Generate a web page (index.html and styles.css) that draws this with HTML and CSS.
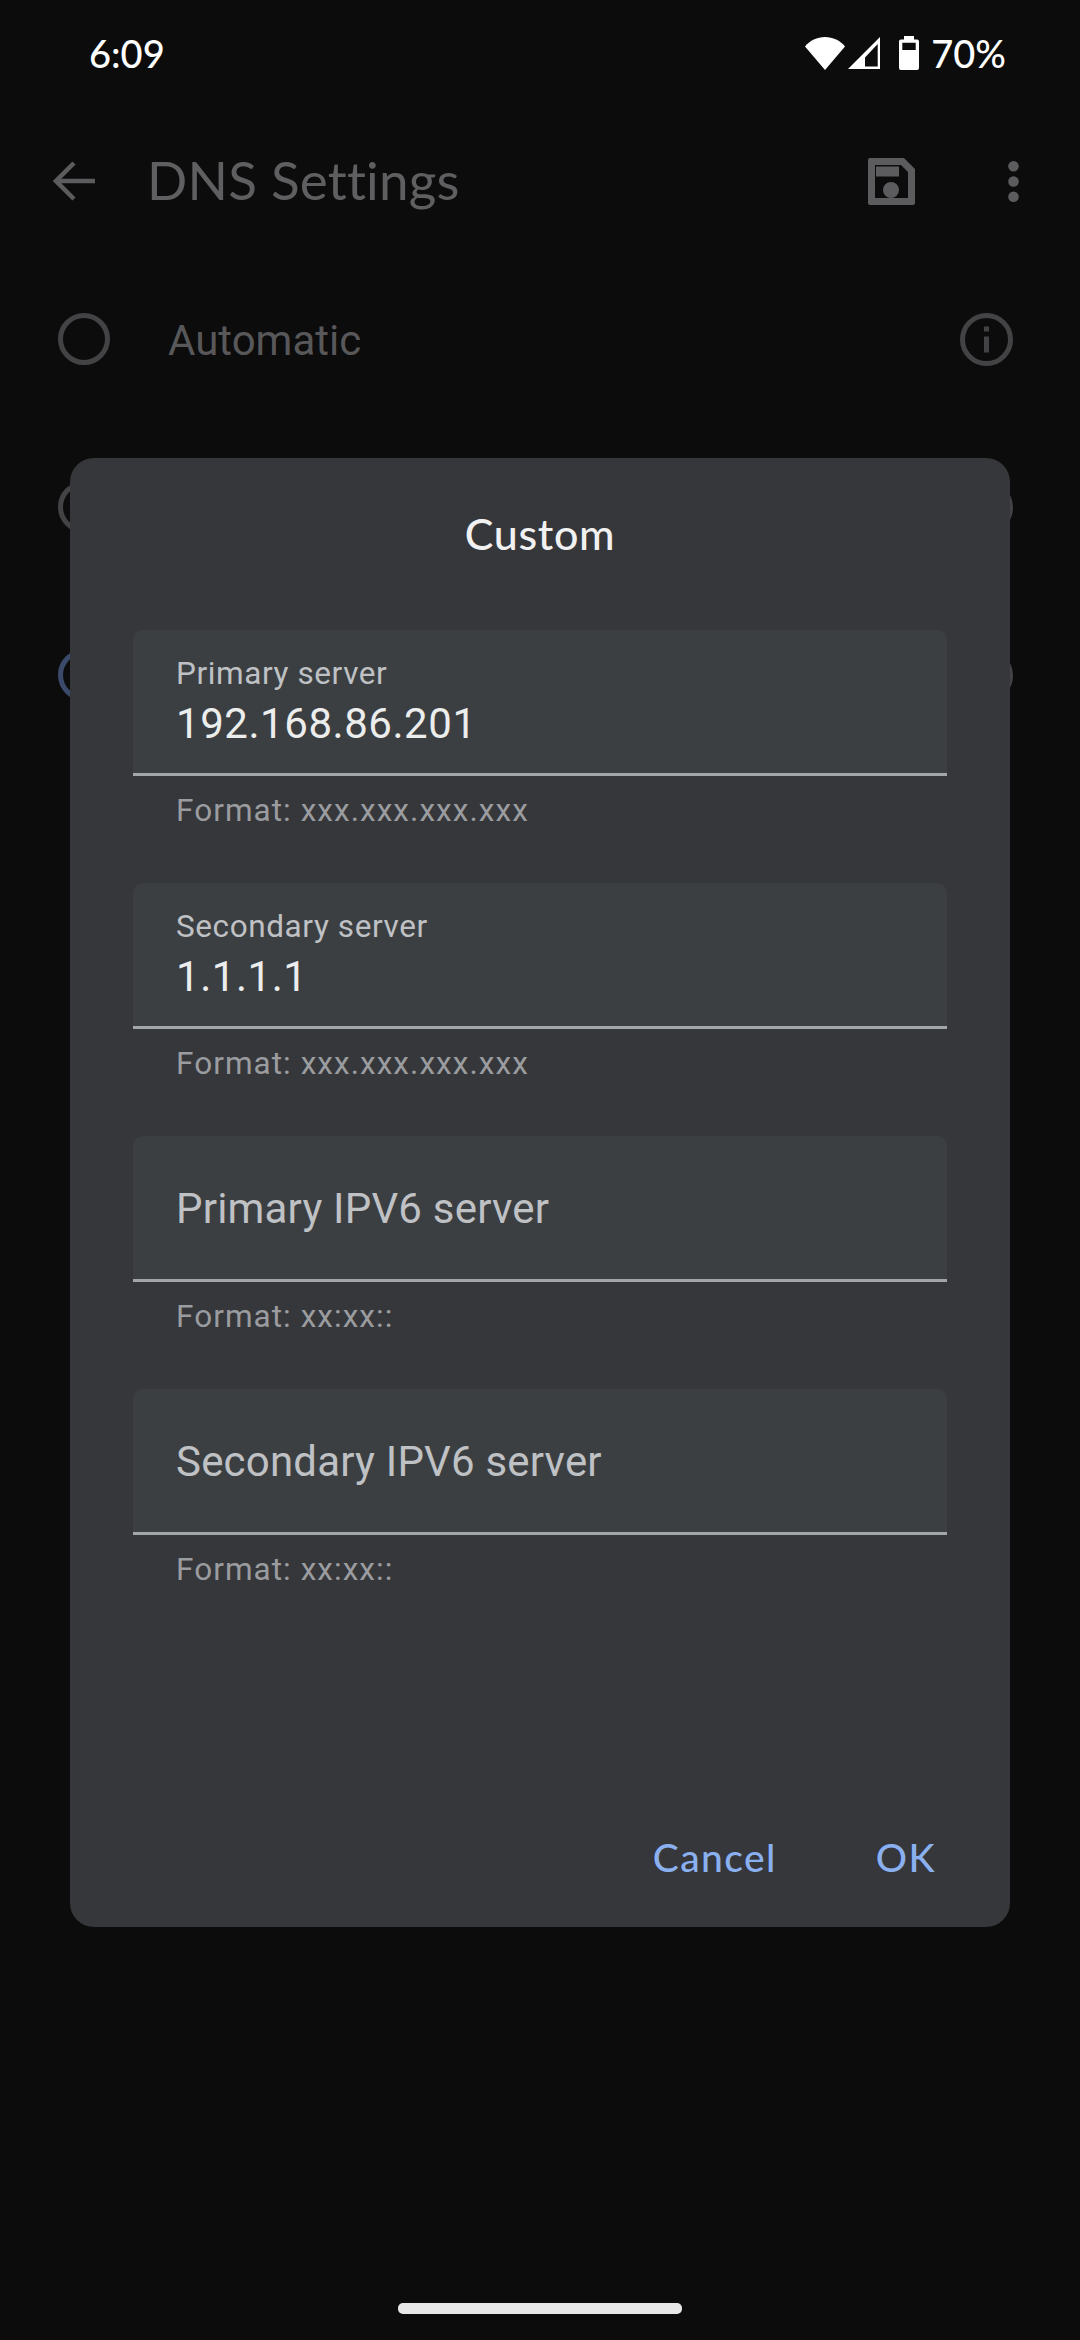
FILE: index.html
```html
<!DOCTYPE html>
<html lang="en">
<head>
<meta charset="utf-8">
<title>DNS Settings</title>
<link rel="stylesheet" href="styles.css">
</head>
<body>
<div class="screen">
  <header class="status">
    <span class="time">6:09</span>
    <div class="status-right">
      <svg class="ic-wifi" width="40" height="33" viewBox="0 0 40 33"><path d="M0 9.500C5 3.500 12 0 20 0s15 3.500 20 9.500L20 33z" fill="#fff"/></svg>
      <svg class="ic-signal" width="32" height="32" viewBox="0 0 32 32"><path fill-rule="evenodd" d="M32 0v32H0zM29.700 7 17 20.500v9h12.700z" fill="#fff"/></svg>
      <svg class="ic-batt" width="20" height="34" viewBox="0 0 20 34"><path fill-rule="evenodd" d="M5 0h10v3.500h3a2 2 0 0 1 2 2V32a2 2 0 0 1-2 2H2a2 2 0 0 1-2-2V5.500a2 2 0 0 1 2-2h3zM3.300 6.700V14h13.400V6.700z" fill="#fff"/></svg>
      <span class="pct">70%</span>
    </div>
  </header>
  <div class="toolbar">
    <svg class="back" width="42" height="40" viewBox="0 0 42 40"><path d="M42 20H4M21 2 3 20l18 18" fill="none" stroke="#5c5c5e" stroke-width="4.500"/></svg>
    <h1 class="page-title">DNS Settings</h1>
    <svg class="save" width="47" height="47" viewBox="0 0 47 47"><path fill-rule="evenodd" d="M2 0h34l11 11v34a2 2 0 0 1-2 2H2a2 2 0 0 1-2-2V2a2 2 0 0 1 2-2zM7 7v33h33V14l-7-7zM8 8.500h23v10H8zM23 24a8 8 0 1 1 0 16 8 8 0 0 1 0-16z" fill="#5c5c5e"/></svg>
    <svg class="more" width="11" height="41" viewBox="0 0 11 41"><circle cx="5.500" cy="5.300" r="5.300" fill="#5c5c5e"/><circle cx="5.500" cy="20.500" r="5.300" fill="#5c5c5e"/><circle cx="5.500" cy="35.700" r="5.300" fill="#5c5c5e"/></svg>
  </div>
  <div class="options">
    <div class="option">
      <span class="radio"></span>
      <span class="option-label">Automatic</span>
      <svg class="info" width="53" height="53" viewBox="0 0 53 53"><circle cx="26.500" cy="26.500" r="24" fill="none" stroke="#434345" stroke-width="5"/><path d="M24 13.500h5v5h-5zM24 23.500h5v16h-5z" fill="#434345"/></svg>
    </div>
    <div class="option">
      <span class="radio"></span>
      <span class="option-label"></span>
      <svg class="info" width="53" height="53" viewBox="0 0 53 53"><circle cx="26.500" cy="26.500" r="24" fill="none" stroke="#434345" stroke-width="5"/></svg>
    </div>
    <div class="option">
      <span class="radio radio-on"></span>
      <span class="option-label"></span>
      <svg class="info" width="53" height="53" viewBox="0 0 53 53"><circle cx="26.500" cy="26.500" r="24" fill="none" stroke="#434345" stroke-width="5"/></svg>
    </div>
  </div>
  <div class="home-pill"></div>

  <section class="dialog">
    <h2 class="dialog-title">Custom</h2>
    <div class="fields">
      <div class="field-group">
        <div class="field">
          <span class="float-label">Primary server</span>
          <span class="value">192.168.86.201</span>
        </div>
        <p class="helper">Format: xxx.xxx.xxx.xxx</p>
      </div>
      <div class="field-group">
        <div class="field">
          <span class="float-label">Secondary server</span>
          <span class="value">1.1.1.1</span>
        </div>
        <p class="helper">Format: xxx.xxx.xxx.xxx</p>
      </div>
      <div class="field-group">
        <div class="field field-empty">
          <span class="placeholder">Primary IPV6 server</span>
        </div>
        <p class="helper">Format: xx:xx::</p>
      </div>
      <div class="field-group">
        <div class="field field-empty">
          <span class="placeholder">Secondary IPV6 server</span>
        </div>
        <p class="helper">Format: xx:xx::</p>
      </div>
    </div>
    <div class="actions">
      <span class="action">Cancel</span>
      <span class="action">OK</span>
    </div>
  </section>
</div>
</body>
</html>
```
FILE: styles.css
```css
* { box-sizing: border-box; }
html, body { margin: 0; padding: 0; }
body { background: #0c0c0c; font-family: Roboto, sans-serif; }
.screen { position: relative; width: 1080px; height: 2340px; background: #0c0c0c; overflow: hidden; }

.status { display: flex; justify-content: space-between; align-items: center; height: 54px; margin-top: 26px; padding: 0 74px 0 89px; color: #fff; font-family: Lato, sans-serif; font-size: 38px; font-weight: 500; }
.status-right { display: flex; align-items: center; }
.ic-signal { margin-left: 3px; }
.ic-batt { margin-left: 19px; margin-top: -1px; }
.pct { margin-left: 12px; }

.toolbar { display: flex; align-items: center; height: 48px; margin-top: 77px; padding: 0 61px 0 53px; }
.page-title { flex: 1; margin: -3px 0 0 52px; font-family: Lato, sans-serif; font-weight: 400; font-size: 53px; letter-spacing: 0.2px; color: #5f5f61; }
.more { margin-left: 93px; }

.options { display: flex; flex-direction: column; margin-top: 50px; padding: 0 67px 0 58px; }
.option { display: flex; align-items: center; height: 168px; }
.radio { width: 52px; height: 52px; border-radius: 50%; border: 5px solid #434345; }
.radio-on { border-color: #3b4a6b; }
.option-label { flex: 1; margin: 2px 0 0 58px; font-size: 42px; color: #58585a; }

.home-pill { position: absolute; left: 398px; top: 2303px; width: 284px; height: 10.500px; border-radius: 5px; background: #e8e8e8; }

.dialog { position: absolute; left: 70px; top: 458px; width: 940px; height: 1469px; padding: 0 63px; border-radius: 24px; background: #36373b; display: flex; flex-direction: column; }
.dialog-title { margin: 49px 0 0; height: 54px; line-height: 54px; text-align: center; font-family: Lato, sans-serif; font-weight: 500; font-size: 43px; letter-spacing: 0.7px; color: #f1f1f2; }
.fields { display: flex; flex-direction: column; margin-top: 69px; }
.field-group { height: 253px; }
.field { display: flex; flex-direction: column; height: 146px; padding: 24px 43px 0; border-radius: 10px 10px 0 0; background: #3c3f42; border-bottom: 3px solid #a3a6a8; }
.float-label { font-size: 31.500px; line-height: 40px; letter-spacing: 0.6px; color: #bfc1c4; }
.value { margin-top: 4px; font-size: 42px; line-height: 52px; color: #eceded; letter-spacing: 0.55px; }
.field-empty { justify-content: center; padding-top: 2px; }
.placeholder { font-size: 42px; line-height: 52px; letter-spacing: 0.2px; color: #bfc1c4; }
.helper { margin: 0; padding: 15px 43px 0; font-size: 31.500px; line-height: 40px; letter-spacing: 1.05px; color: #9a9c9f; }
.actions { display: flex; justify-content: flex-end; gap: 99px; margin-top: auto; margin-bottom: 47px; padding-right: 11px; font-family: Lato, sans-serif; font-weight: 500; font-size: 39px; letter-spacing: 1.4px; color: #8ab0f0; }
```
